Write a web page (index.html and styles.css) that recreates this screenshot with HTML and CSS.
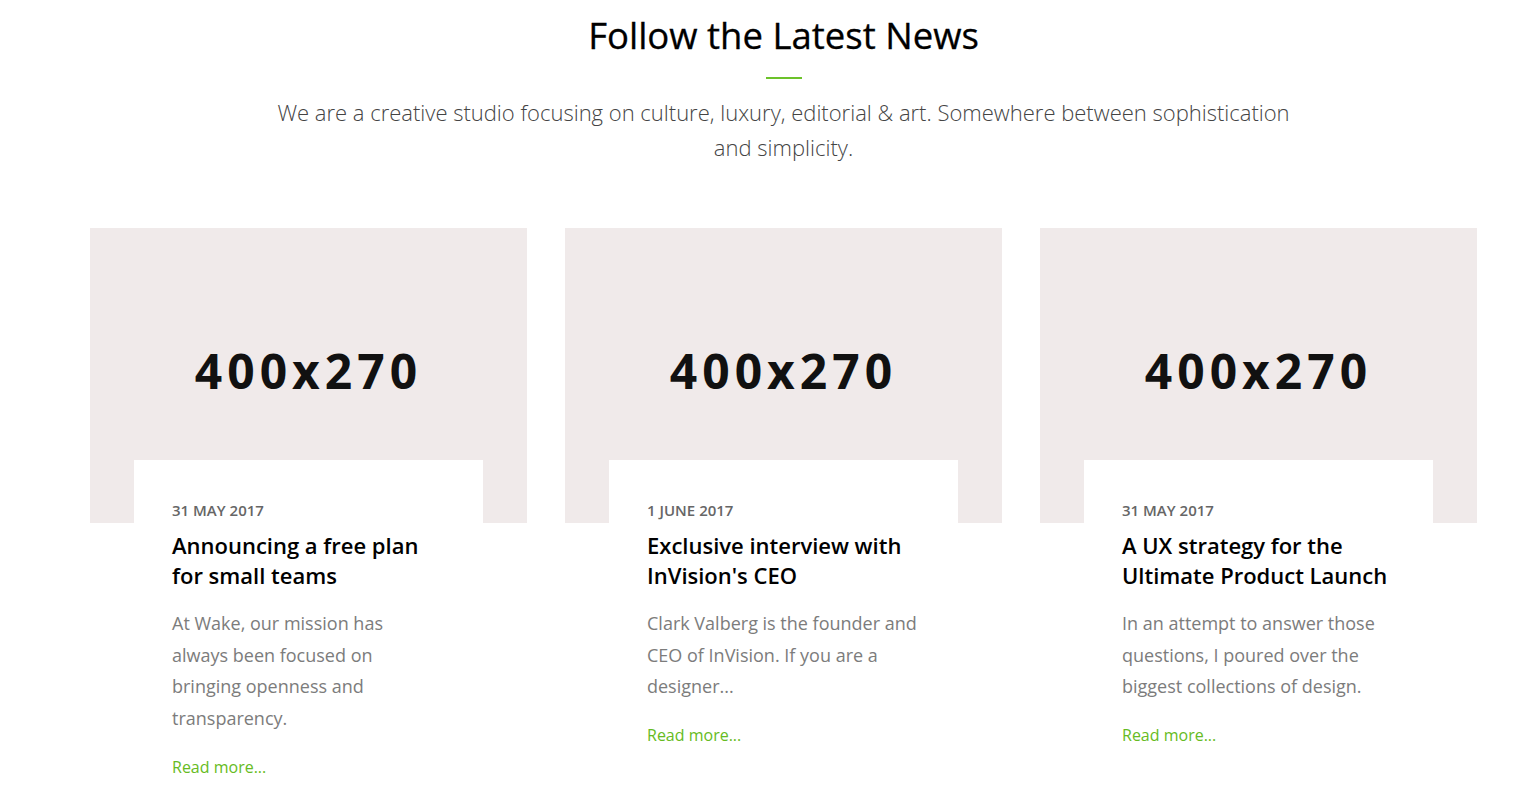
FILE: index.html
```html
<!DOCTYPE html>
<html lang="en">
<head>
<meta charset="utf-8">
<title>Follow the Latest News</title>
<link rel="stylesheet" href="styles.css">
</head>
<body>
<section class="news">
  <header class="news-head">
    <h2 class="news-title">Follow the Latest News</h2>
    <span class="news-rule"></span>
    <p class="news-lead">We are a creative studio focusing on culture, luxury, editorial &amp; art. Somewhere between sophistication and simplicity.</p>
  </header>
  <div class="news-grid">
    <article class="card">
      <div class="card-img"><span>400x270</span></div>
      <div class="card-body">
        <div class="card-date">31 May 2017</div>
        <h3 class="card-title">Announcing a free plan for small teams</h3>
        <p class="card-text">At Wake, our mission has always been focused on bringing openness and transparency.</p>
        <a class="card-link" href="#">Read more...</a>
      </div>
    </article>
    <article class="card">
      <div class="card-img"><span>400x270</span></div>
      <div class="card-body">
        <div class="card-date">1 June 2017</div>
        <h3 class="card-title">Exclusive interview with InVision's CEO</h3>
        <p class="card-text">Clark Valberg is the founder and CEO of InVision. If you are a designer...</p>
        <a class="card-link" href="#">Read more...</a>
      </div>
    </article>
    <article class="card">
      <div class="card-img"><span>400x270</span></div>
      <div class="card-body">
        <div class="card-date">31 May 2017</div>
        <h3 class="card-title">A UX strategy for the Ultimate Product Launch</h3>
        <p class="card-text">In an attempt to answer those questions, I poured over the biggest collections of design.</p>
        <a class="card-link" href="#">Read more...</a>
      </div>
    </article>
  </div>
</section>
</body>
</html>
```
FILE: styles.css
```css
* { box-sizing: border-box; }
html, body { margin: 0; padding: 0; background: #fff; }
body { font-family: "Open Sans", "Liberation Sans", sans-serif; color: #000; }

.news {
  width: 1387px;
  margin-left: 90px;
  padding-top: 12px;
}

.news-head {
  display: flex;
  flex-direction: column;
  align-items: center;
  text-align: center;
}

.news-title {
  margin: 0;
  font-size: 36.5px;
  font-weight: 400;
  line-height: 46px;
  color: #000;
  -webkit-text-stroke: 0.3px #000;
}

.news-rule {
  display: block;
  width: 36px;
  height: 2px;
  background: #6cc22a;
  margin-top: 19px;
}

.news-lead {
  margin: 16px 0 0;
  max-width: 1040px;
  font-size: 22px;
  font-weight: 300;
  line-height: 35px;
  color: #444;
}

.news-grid {
  display: grid;
  grid-template-columns: repeat(3, 437px);
  column-gap: 38px;
  margin-top: 63px;
}

.card { display: flex; flex-direction: column; }

.card-img {
  height: 295px;
  background: #f0eaea;
  display: flex;
  align-items: center;
  justify-content: center;
  padding-bottom: 10px;
}

.card-img span {
  font-size: 48px;
  font-weight: 700;
  letter-spacing: 5px;
  color: #111;
}

.card-body {
  position: relative;
  margin: -63px 44px 0;
  background: #fff;
  padding: 40px 41px 0 38px;
}

.card-date {
  font-size: 15px;
  font-weight: 600;
  line-height: 20px;
  text-transform: uppercase;
  color: #666;
}

.card-title {
  margin: 10px 0 0;
  font-size: 22px;
  font-weight: 600;
  line-height: 30px;
  color: #000;
}

.card-text {
  margin: 18px 0 0;
  font-size: 18px;
  font-weight: 400;
  line-height: 31.7px;
  color: #7c7c7c;
}

.card-link {
  display: inline-block;
  margin-top: 22px;
  font-size: 16px;
  line-height: 20px;
  color: #66bb22;
  text-decoration: none;
}
```
